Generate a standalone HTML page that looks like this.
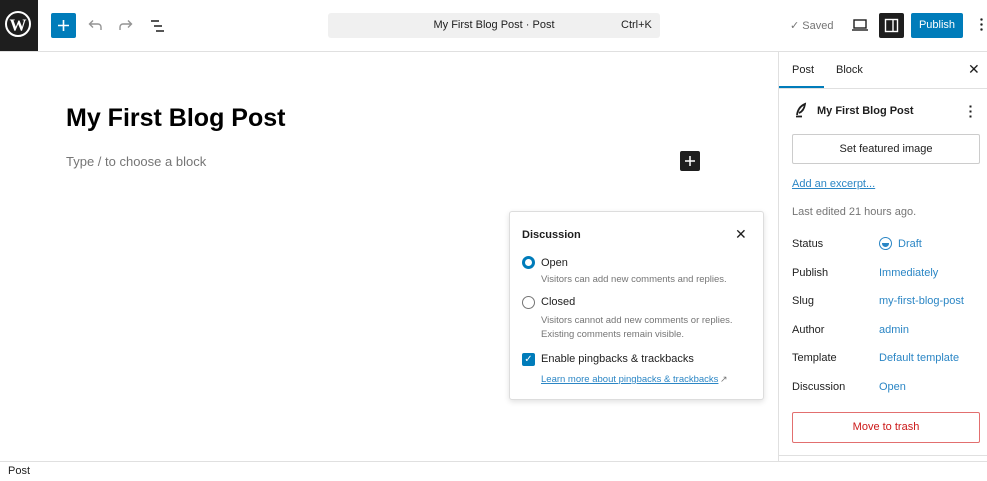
<!DOCTYPE html>
<html><head><meta charset="utf-8"><style>
*{box-sizing:border-box;margin:0;padding:0}
body{width:987px;height:481px;overflow:hidden;background:#fff;font-family:"Liberation Sans",sans-serif;color:#1e1e1e;position:relative;font-size:11px}
.a{position:absolute}
.blue{color:#2271b1}
.lbl{font-size:11px;color:#1e1e1e}
.val{font-size:11px;color:#2b86c5}
</style></head><body>
<!-- top bar -->
<div class="a" style="left:0;top:0;width:38px;height:51px;background:#1e1e1e"></div>
<svg class="a" style="left:2px;top:8px" width="32" height="32" viewBox="0 0 32 32"><circle cx="16" cy="16" r="12" fill="none" stroke="#fff" stroke-width="2"/><text x="16" y="22.5" text-anchor="middle" font-family="Liberation Serif" font-weight="bold" font-size="17" fill="#fff">W</text></svg>
<div class="a" style="left:0;top:51px;width:987px;height:1px;background:#e0e0e0"></div>
<div class="a" style="left:51px;top:13px;width:25px;height:25px;background:#007cba;border-radius:2px"></div>
<svg class="a" style="left:55px;top:17px" width="17" height="17"><path d="M8.5 3v11M3 8.5h11" stroke="#fff" stroke-width="1.6"/></svg>
<svg class="a" style="left:86px;top:17px" width="18" height="18"><path d="M15 13V10a3 3 0 0 0-3-3H4M7 3.5 3.5 7 7 10.5" fill="none" stroke="#949494" stroke-width="1.4"/></svg>
<svg class="a" style="left:117px;top:17px" width="18" height="18"><path d="M3 13V10a3 3 0 0 1 3-3h8M11 3.5 14.5 7 11 10.5" fill="none" stroke="#949494" stroke-width="1.4"/></svg>
<svg class="a" style="left:149px;top:17px" width="18" height="18"><path d="M2 4h8M5 9h8M7 14h8" stroke="#1e1e1e" stroke-width="1.6"/></svg>
<div class="a" style="left:328px;top:13px;width:332px;height:25px;background:#f0f0f0;border-radius:3px"></div>
<div class="a" style="left:328px;top:19px;width:332px;text-align:center;font-size:11px;color:#1e1e1e">My First Blog Post · Post</div>
<div class="a" style="left:621px;top:19px;font-size:11px;color:#1e1e1e">Ctrl+K</div>
<div class="a" style="left:790px;top:19px;font-size:11px;color:#757575">✓ Saved</div>
<svg class="a" style="left:851px;top:17px" width="18" height="16"><rect x="3" y="3" width="12" height="8" fill="none" stroke="#1e1e1e" stroke-width="1.4"/><path d="M1 13h16" stroke="#1e1e1e" stroke-width="1.4"/></svg>
<div class="a" style="left:879px;top:13px;width:25px;height:25px;background:#1e1e1e;border-radius:2px"></div>
<svg class="a" style="left:883px;top:17px" width="17" height="17"><rect x="2.5" y="2.5" width="12" height="12" fill="none" stroke="#fff" stroke-width="1.4"/><path d="M10 2.5v12" stroke="#fff" stroke-width="1.4"/></svg>
<div class="a" style="left:911px;top:13px;width:52px;height:25px;background:#007cba;border-radius:2px;color:#fff;font-size:11px;text-align:center;line-height:25px">Publish</div>
<div class="a" style="left:980px;top:17px;width:3px;height:15px;background:radial-gradient(circle,#1e1e1e 1.2px,transparent 1.3px) 0 0/3px 5px"></div>
<!-- editor -->
<div class="a" style="left:66px;top:104px;font-size:25px;font-weight:bold;color:#000">My First Blog Post</div>
<div class="a" style="left:66px;top:154px;font-size:13px;color:#757575">Type / to choose a block</div>
<div class="a" style="left:680px;top:151px;width:20px;height:20px;background:#1e1e1e;border-radius:2px"></div>
<svg class="a" style="left:682px;top:153px" width="16" height="16"><path d="M8 3v10M3 8h10" stroke="#fff" stroke-width="1.5"/></svg>
<!-- popover -->
<div class="a" style="left:509px;top:211px;width:255px;height:189px;border:1px solid #ddd;border-radius:3px;background:#fff;box-shadow:0 2px 6px rgba(0,0,0,.12)"></div>
<div class="a" style="left:522px;top:229px;font-size:11px;font-weight:bold;color:#1e1e1e">Discussion</div>
<div class="a" style="left:735px;top:226px;font-size:14px">✕</div>
<div class="a" style="left:522px;top:256px;width:13px;height:13px;border-radius:50%;border:3.5px solid #007cba"></div>
<div class="a" style="left:541px;top:257px;font-size:11px">Open</div>
<div class="a" style="left:541px;top:274px;font-size:9.5px;color:#757575">Visitors can add new comments and replies.</div>
<div class="a" style="left:522px;top:296px;width:13px;height:13px;border-radius:50%;border:1px solid #757575"></div>
<div class="a" style="left:541px;top:296px;font-size:11px">Closed</div>
<div class="a" style="left:541px;top:314px;font-size:9.5px;color:#757575;line-height:14px">Visitors cannot add new comments or replies.<br>Existing comments remain visible.</div>
<div class="a" style="left:522px;top:353px;width:13px;height:13px;background:#007cba;border-radius:2px;color:#fff;font-size:10px;text-align:center;line-height:13px">✓</div>
<div class="a" style="left:541px;top:353px;font-size:11px">Enable pingbacks &amp; trackbacks</div>
<div class="a" style="left:541px;top:374px;font-size:9.5px;color:#2b86c5;text-decoration:underline">Learn more about pingbacks &amp; trackbacks</div>
<div class="a" style="left:720px;top:374px;font-size:9px;color:#757575">↗</div>
<!-- sidebar -->
<div class="a" style="left:778px;top:52px;width:1px;height:410px;background:#e0e0e0"></div>
<div class="a" style="left:792px;top:64px;font-size:11px">Post</div>
<div class="a" style="left:836px;top:64px;font-size:11px">Block</div>
<div class="a" style="left:968px;top:61px;font-size:14px">✕</div>
<div class="a" style="left:779px;top:86px;width:45px;height:2px;background:#007cba"></div>
<div class="a" style="left:779px;top:88px;width:208px;height:1px;background:#e0e0e0"></div>
<svg class="a" style="left:794px;top:102px" width="14" height="16"><path d="M3 13 Q4 5 11 2 Q10 9 5 11M2 14.5h6" fill="none" stroke="#1e1e1e" stroke-width="1.8"/></svg>
<div class="a" style="left:817px;top:105px;font-size:11px;font-weight:bold">My First Blog Post</div>
<div class="a" style="left:969px;top:104px;width:3px;height:14px;background:radial-gradient(circle,#1e1e1e 1.1px,transparent 1.2px) 0 0/3px 5px"></div>
<div class="a" style="left:792px;top:134px;width:188px;height:30px;border:1px solid #ccc;border-radius:2px;text-align:center;line-height:28px;font-size:11px">Set featured image</div>
<div class="a" style="left:792px;top:178px;font-size:11px;color:#2b86c5;text-decoration:underline">Add an excerpt...</div>
<div class="a" style="left:792px;top:206px;font-size:11px;color:#757575">Last edited 21 hours ago.</div>
<div class="a lbl" style="left:792px;top:238px">Status</div>
<div class="a" style="left:879px;top:237px;width:13px;height:13px;border:1.5px solid #2b86c5;border-radius:50%"></div>
<div class="a" style="left:882px;top:243px;width:7px;height:3.5px;background:#2b86c5;border-radius:0 0 4px 4px"></div>
<div class="a val" style="left:898px;top:238px">Draft</div>
<div class="a lbl" style="left:792px;top:267px">Publish</div><div class="a val" style="left:879px;top:267px">Immediately</div>
<div class="a lbl" style="left:792px;top:295px">Slug</div><div class="a val" style="left:879px;top:295px">my-first-blog-post</div>
<div class="a lbl" style="left:792px;top:324px">Author</div><div class="a val" style="left:879px;top:324px">admin</div>
<div class="a lbl" style="left:792px;top:352px">Template</div><div class="a val" style="left:879px;top:352px">Default template</div>
<div class="a lbl" style="left:792px;top:381px">Discussion</div><div class="a val" style="left:879px;top:381px">Open</div>
<div class="a" style="left:792px;top:412px;width:188px;height:31px;border:1px solid #e26f6f;border-radius:2px;text-align:center;line-height:29px;font-size:11px;color:#cc1818">Move to trash</div>
<div class="a" style="left:779px;top:455px;width:208px;height:1px;background:#e0e0e0"></div>
<!-- footer -->
<div class="a" style="left:0;top:461px;width:987px;height:1px;background:#e0e0e0"></div>
<div class="a" style="left:8px;top:465px;font-size:11px">Post</div>
</body></html>
